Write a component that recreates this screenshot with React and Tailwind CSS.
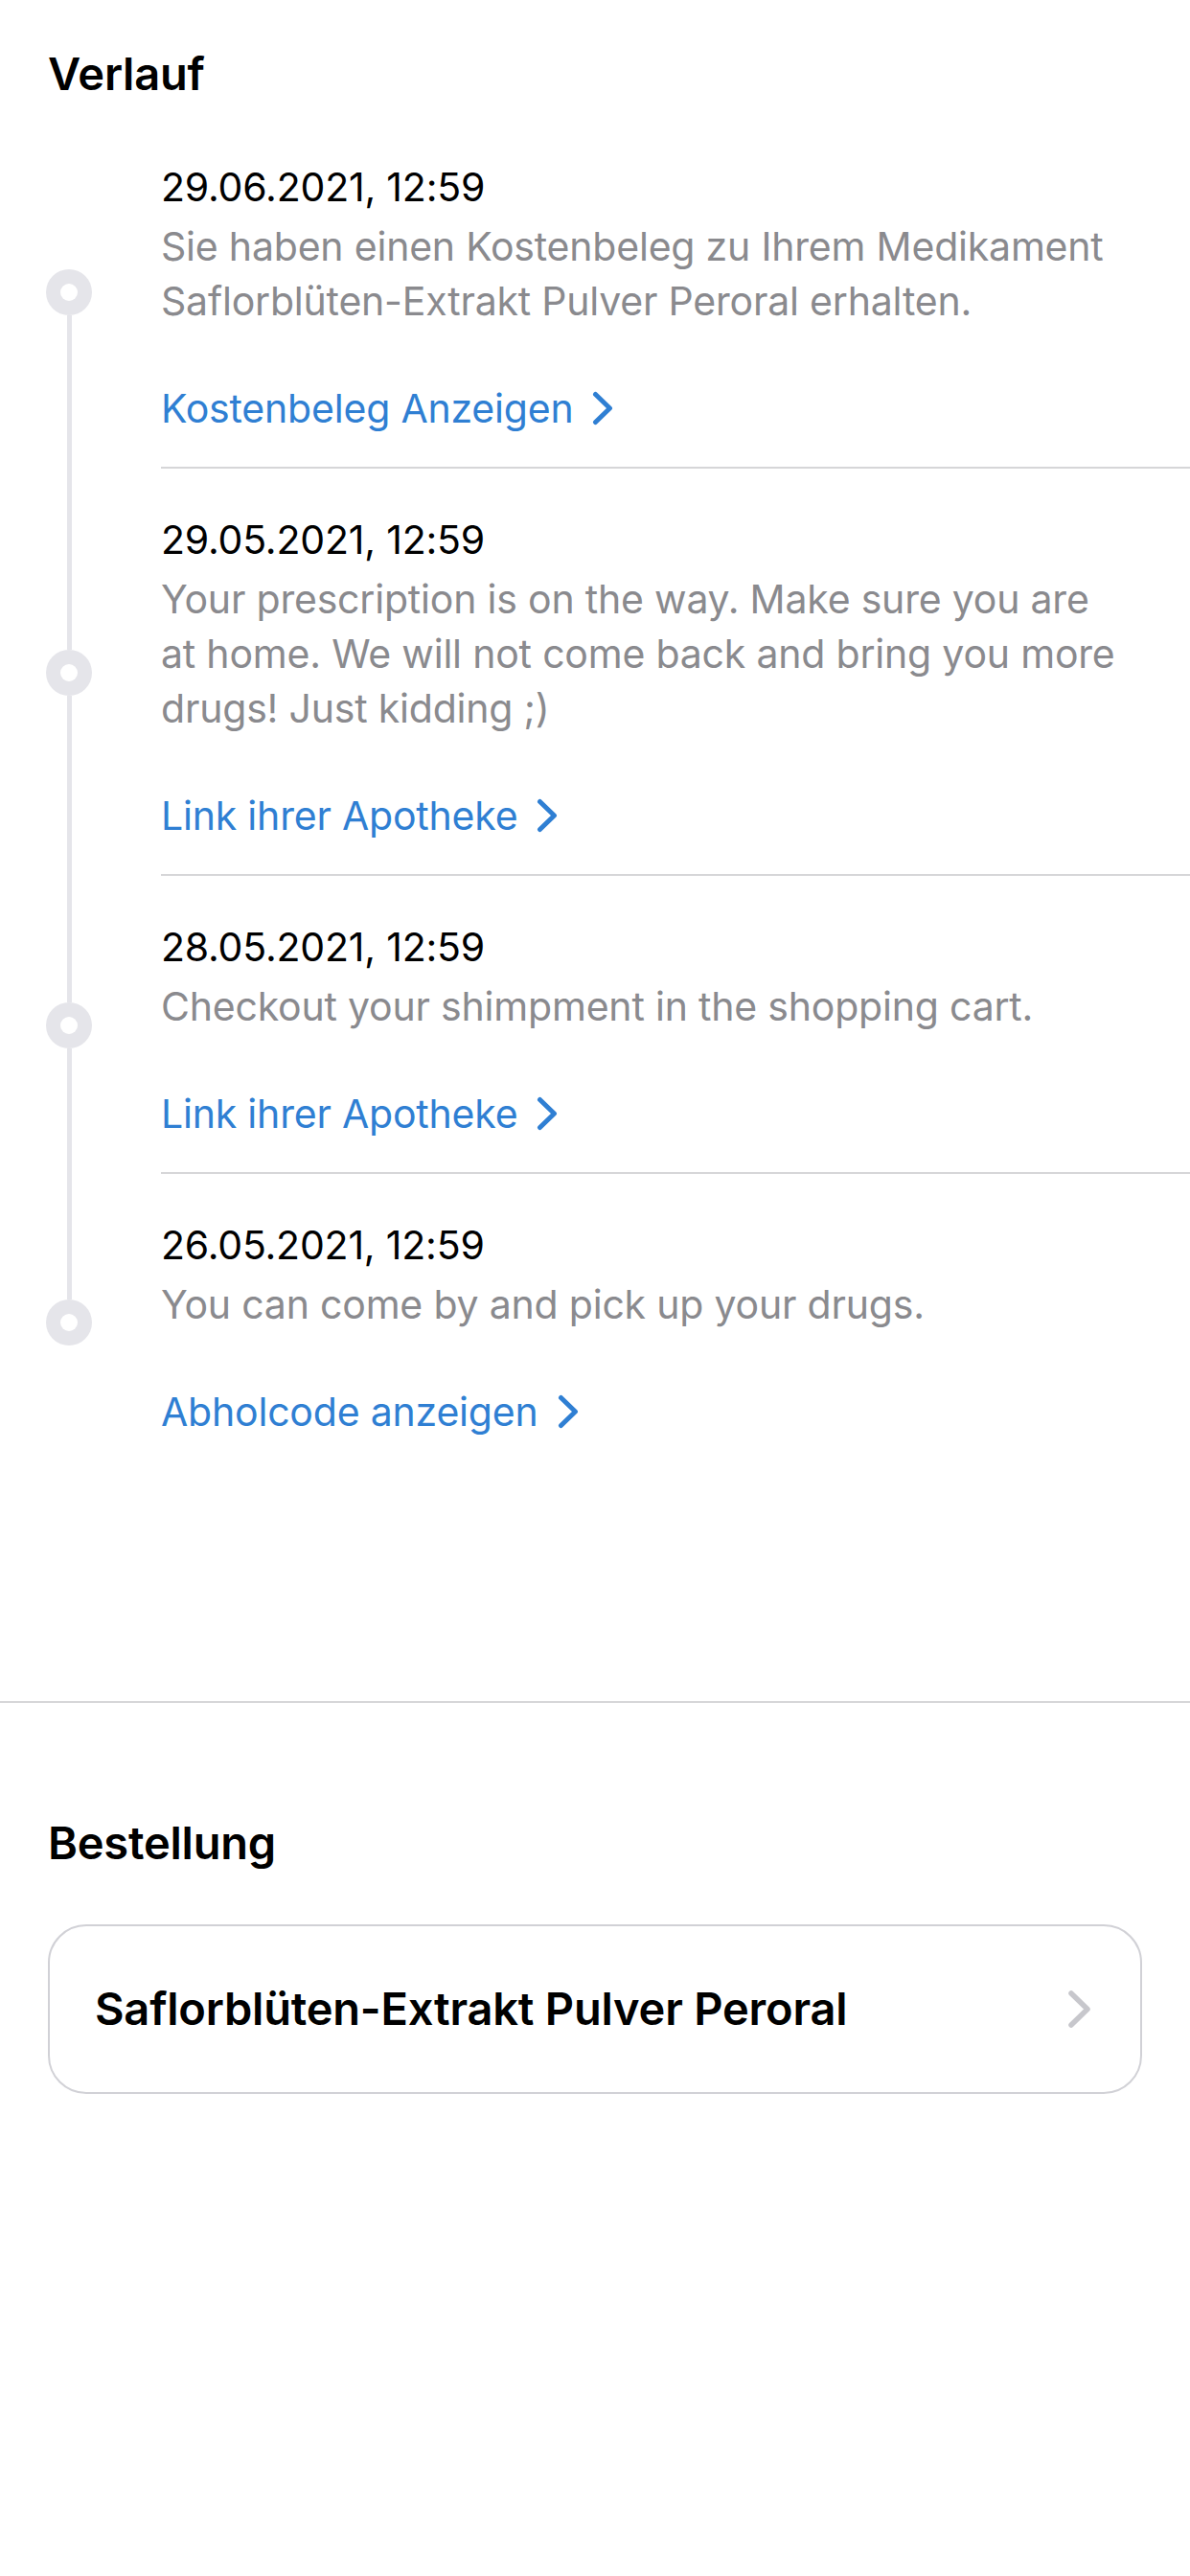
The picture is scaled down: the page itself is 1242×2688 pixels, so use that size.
import React from "react";

const events = [
  {
    date: "29.06.2021, 12:59",
    text: "Sie haben einen Kostenbeleg zu Ihrem Medikament Saflorblüten-Extrakt Pulver Peroral erhalten.",
    link: "Kostenbeleg Anzeigen",
  },
  {
    date: "29.05.2021, 12:59",
    text: "Your prescription is on the way. Make sure you are at home. We will not come back and bring you more drugs! Just kidding ;)",
    link: "Link ihrer Apotheke",
  },
  {
    date: "28.05.2021, 12:59",
    text: "Checkout your shimpment in the shopping cart.",
    link: "Link ihrer Apotheke",
  },
  {
    date: "26.05.2021, 12:59",
    text: "You can come by and pick up your drugs.",
    link: "Abholcode anzeigen",
  },
];

function Chevron({ className }) {
  return (
    <svg className={className} viewBox="0 0 22 36" fill="none">
      <path d="M3.5 3.5 L18.5 18 L3.5 32.5" stroke="currentColor" strokeWidth="5" strokeLinecap="round" strokeLinejoin="round" />
    </svg>
  );
}

function TimelineRow({ item, first, last }) {
  return (
    <div className="flex">
      <div className="w-[144px] shrink-0 flex flex-col items-center">
        <div className={`flex-1 w-[5px] ${first ? "bg-transparent" : "bg-[#e5e5ea]"}`} />
        <div className="h-[48px] w-[48px] rounded-full bg-[#e5e5ea] grid place-items-center">
          <div className="h-[18px] w-[18px] rounded-full bg-white" />
        </div>
        <div className={`flex-1 w-[5px] ${last ? "bg-transparent" : "bg-[#e5e5ea]"}`} />
      </div>
      <div className={`ml-[24px] flex-1 pt-[49px] pb-[36px] ${last ? "" : "border-b-2 border-[#d6d6d8]"}`}>
        <div className="pr-[66px]">
          <div className="text-[41px] leading-[50px] text-black mb-[9px]">{item.date}</div>
          <p className="text-[41px] leading-[57px] text-[#8a8a8e]">{item.text}</p>
          <div className="mt-[58px] flex items-center gap-[20px] text-[41px] leading-[50px] text-[#2f7fd3]">
            <span>{item.link}</span>
            <Chevron className="w-[22px] h-[36px]" />
          </div>
        </div>
      </div>
    </div>
  );
}

export default function App() {
  return (
    <div className="min-h-screen bg-white font-['Inter','Noto_Sans',sans-serif] tracking-[-0.2px]">
      <div className="pt-[47px] px-[50px]">
        <h2 className="text-[47px] leading-[60px] font-semibold text-black">Verlauf</h2>
      </div>

      <div className="mt-[14px]">
        {events.map((item, i) => (
          <TimelineRow key={item.date + i} item={item} first={i === 0} last={i === events.length - 1} />
        ))}
      </div>

      <div className="mt-[241px] h-[2px] bg-[#d6d6d8]" />

      <div className="px-[50px] pt-[116px] pb-[200px]">
        <h2 className="text-[47px] leading-[60px] font-semibold text-black">Bestellung</h2>
        <button className="mt-[55px] w-full h-[177px] rounded-[40px] border-2 border-[#d1d1d6] bg-white flex items-center justify-between pl-[47px] pr-[50px] text-left">
          <span className="text-[47px] font-semibold text-black">Saflorblüten-Extrakt Pulver Peroral</span>
          <svg className="w-[26px] h-[41px] text-[#c7c7cc]" viewBox="0 0 26 41" fill="none">
            <path d="M4 4 L21 20.5 L4 37" stroke="currentColor" strokeWidth="5.5" strokeLinecap="round" strokeLinejoin="round" />
          </svg>
        </button>
      </div>
    </div>
  );
}
